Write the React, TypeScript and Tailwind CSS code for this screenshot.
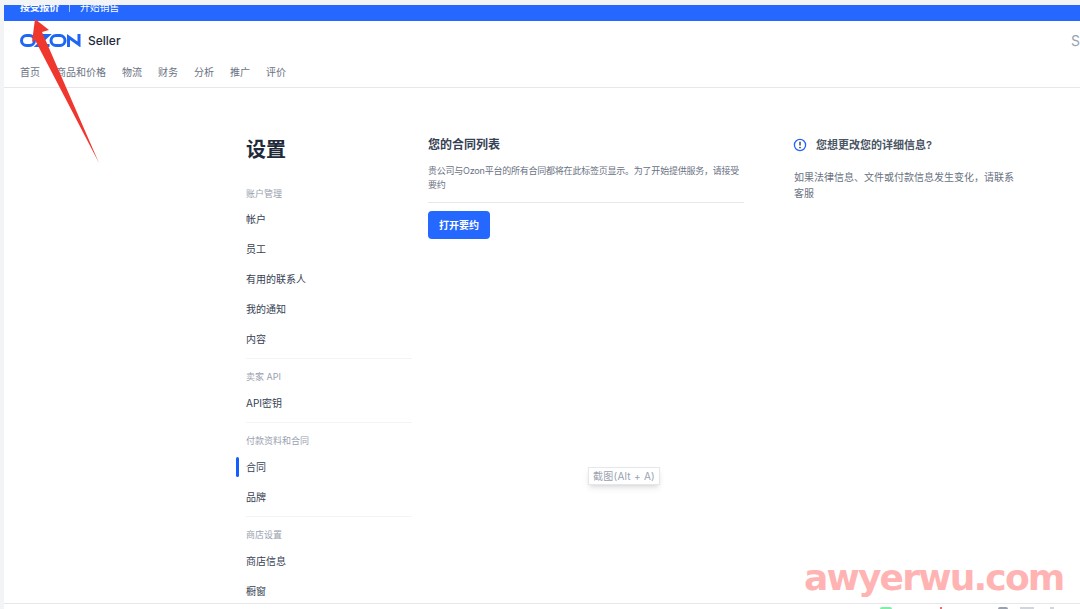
const font = { fontFamily: '"Inter", "Noto Sans CJK SC", sans-serif' };

const groups = [
  { label: '账户管理', items: ['帐户', '员工', '有用的联系人', '我的通知', '内容'] },
  { label: '卖家 API', items: ['API密钥'] },
  { label: '付款资料和合同', items: ['合同', '品牌'] },
  { label: '商店设置', items: ['商店信息', '橱窗'] },
];

const nav = ['首页', '商品和价格', '物流', '财务', '分析', '推广', '评价'];

function OzonLogo() {
  return (
    <svg width="62" height="13" viewBox="0 0 62 13" fill="none" stroke="#1f66f5" strokeWidth="3" className="-mt-0.5">
      <rect x="1.5" y="1.5" width="13" height="10" rx="5" />
      <path d="M16 1.5h12L17.5 11.5h12" />
      <rect x="31" y="1.5" width="14" height="10" rx="5" />
      <path d="M48.5 13V3l10.5 7.5V0" />
    </svg>
  );
}

function InfoIcon() {
  return (
    <svg width="16" height="16" viewBox="0 0 16 16" fill="none" className="shrink-0">
      <circle cx="8" cy="8" r="5.6" stroke="#1f66f5" strokeWidth="1.3" />
      <path d="M8 4.8v3.6" stroke="#1b2a4a" strokeWidth="1.3" />
      <circle cx="8" cy="10.6" r="0.8" fill="#1b2a4a" />
    </svg>
  );
}

export default function App() {
  return (
    <div style={font} className="relative flex h-[609px] w-[1080px] flex-col overflow-hidden bg-white">
      <div className="h-1.25 shrink-0 bg-gray-100" />

      <div className="flex min-h-0 flex-1 flex-col border-l-4 border-gray-100">
        <div className="flex h-4 shrink-0 items-start overflow-hidden bg-[#2468ff] pl-4 text-[10px] leading-3 tracking-tight text-white">
          <div className="-mt-1 flex items-center gap-2.5 font-semibold">
            <span>接受报价</span>
            <span className="h-2.5 w-px bg-white/60" />
            <span className="font-normal">开始销售</span>
          </div>
        </div>

        <header className="shrink-0 border-b border-gray-200 px-4">
          <div className="flex h-10 items-center gap-1.5">
            <OzonLogo />
            <span className="text-xs font-medium text-gray-800">Seller</span>
            <span className="-mr-4 ml-auto text-sm text-gray-400">S</span>
          </div>
          <nav className="flex h-6.5 items-start gap-4 pt-px text-[10px] leading-5 text-gray-500">
            {nav.map((n) => (
              <span key={n}>{n}</span>
            ))}
          </nav>
        </header>

        <main className="flex min-h-0 flex-1 items-start overflow-hidden pl-58 pt-12.5">
          <aside className="w-44 shrink-0">
            <h1 className="pl-2.5 text-xl font-bold leading-6 text-gray-800">设置</h1>
            {groups.map((g, i) => (
              <div key={g.label} className={i === 0 ? 'mt-5.5' : 'mt-2'}>
                <div className={i === 0 ? 'ml-2.5 text-[9px] leading-5 text-gray-400' : 'ml-2.5 pb-px text-[9px] leading-5 text-gray-400'}>
                  {g.label}
                </div>
                {g.items.map((item) => (
                  <div key={item} className="relative flex h-7.5 items-center pl-2.5 text-[10px] text-gray-700">
                    {item === '合同' && <span className="absolute left-0 h-5 w-0.75 rounded-full bg-blue-600" />}
                    {item}
                  </div>
                ))}
                {i < groups.length - 1 && <div className="ml-2.5 mt-1 border-t border-gray-100" />}
              </div>
            ))}
          </aside>

          <section className="ml-4 w-79 shrink-0">
            <h2 className="text-xs font-semibold leading-3.5 text-gray-700">您的合同列表</h2>
            <p className="mt-3 border-b border-gray-200 pb-2.5 text-[9px] leading-3.5 tracking-tight text-gray-500">
              贵公司与Ozon平台的所有合同都将在此标签页显示。为了开始提供服务，请接受要约
            </p>
            <button
              type="button"
              className="mt-2 h-7 w-15.5 rounded-sm bg-[#2468ff] text-[10px] font-semibold text-white"
            >
              打开要约
            </button>
          </section>

          <section className="-mt-px ml-12 w-56 shrink-0">
            <div className="flex items-center gap-2 text-[11px] font-semibold leading-4 text-gray-600">
              <InfoIcon />
              <span>您想更改您的详细信息?</span>
            </div>
            <p className="mt-4 pl-0.5 text-[10px] leading-4 text-gray-500">
              如果法律信息、文件或付款信息发生变化，请联系客服
            </p>
          </section>
        </main>

        <div className="flex h-1.5 shrink-0 items-end overflow-hidden border-t border-gray-200 bg-white pl-[876px]">
          <span className="h-0.5 w-3 rounded-t-sm bg-green-300" />
          <span className="ml-12 h-0.5 w-0.5 bg-red-400" />
          <span className="ml-14 h-0.5 w-2.5 rounded-t-full bg-gray-400" />
          <span className="ml-3 h-0.5 w-3.5 bg-gray-300" />
          <span className="ml-4 h-0.5 w-1 bg-gray-300" />
        </div>
      </div>

      <div className="absolute left-[588px] top-[467px] border border-gray-200 bg-white px-1 text-[10px] leading-4 tracking-wide text-gray-400 shadow-md">
        截图(Alt + A)
      </div>

      <div
        style={{ fontFamily: '"DejaVu Sans", sans-serif' }}
        className="absolute left-[804px] top-[558px] text-4xl font-bold tracking-tighter text-[#ffb3b3]"
      >
        awyerwu.com
      </div>

      <svg className="pointer-events-none absolute left-0 top-0" width="120" height="170" viewBox="0 0 120 170">
        <polygon points="35,19 49,30 42,32 99,163 35,40 32,42" fill="#f0372e" />
      </svg>
    </div>
  );
}
